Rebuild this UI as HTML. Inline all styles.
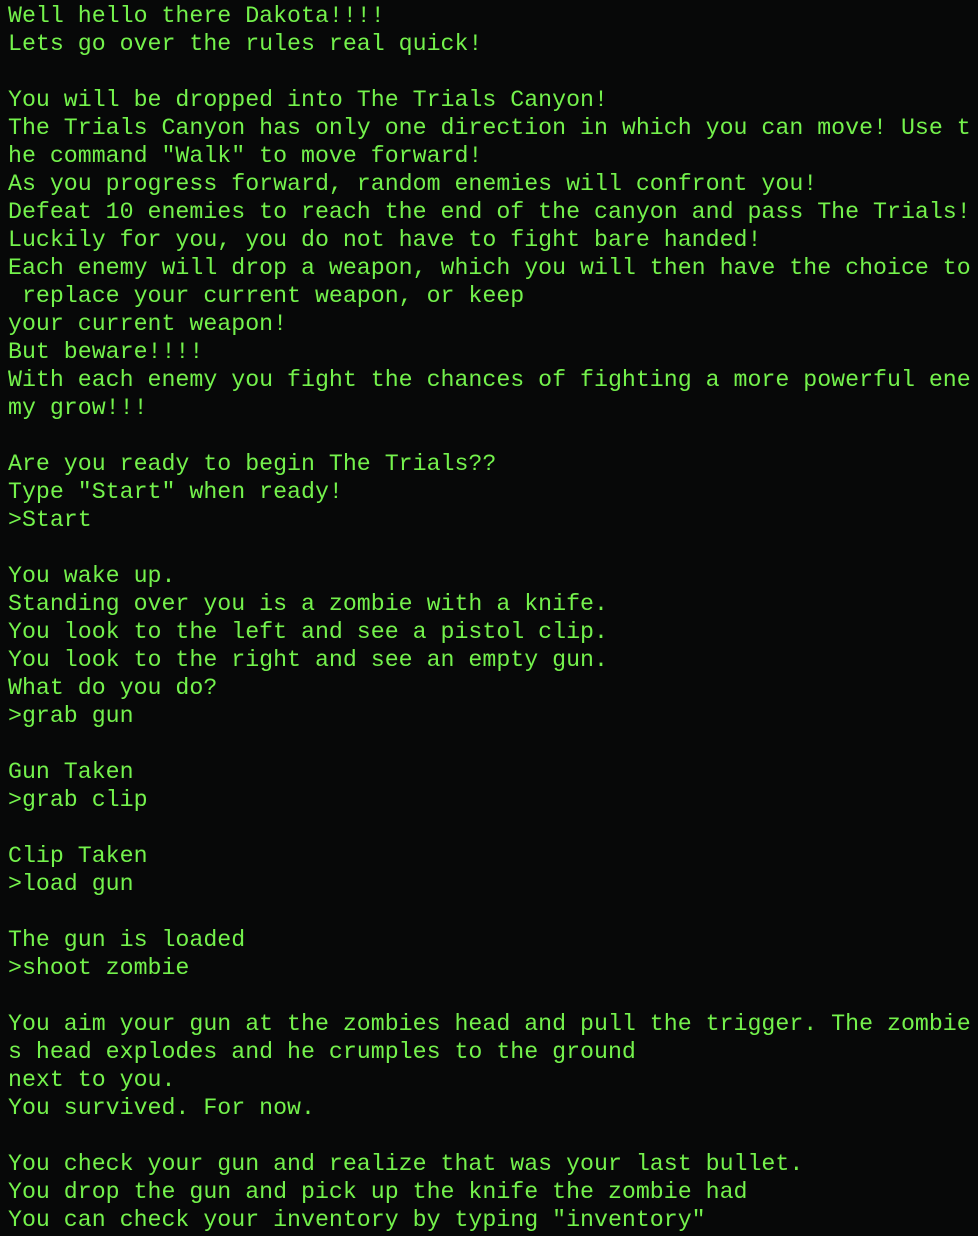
<!DOCTYPE html>
<html><head><meta charset="utf-8"><style>
html,body{margin:0;padding:0;background:#070808;width:978px;height:1236px;overflow:hidden}
pre{margin:0;position:absolute;left:8px;top:2px;font-family:"Liberation Mono",monospace;font-size:23.25px;line-height:28px;color:#74f24c;white-space:pre}
</style></head><body><pre>Well hello there Dakota!!!!
Lets go over the rules real quick!

You will be dropped into The Trials Canyon!
The Trials Canyon has only one direction in which you can move! Use t
he command "Walk" to move forward!
As you progress forward, random enemies will confront you!
Defeat 10 enemies to reach the end of the canyon and pass The Trials!
Luckily for you, you do not have to fight bare handed!
Each enemy will drop a weapon, which you will then have the choice to
 replace your current weapon, or keep
your current weapon!
But beware!!!!
With each enemy you fight the chances of fighting a more powerful ene
my grow!!!

Are you ready to begin The Trials??
Type "Start" when ready!
&gt;Start

You wake up.
Standing over you is a zombie with a knife.
You look to the left and see a pistol clip.
You look to the right and see an empty gun.
What do you do?
&gt;grab gun

Gun Taken
&gt;grab clip

Clip Taken
&gt;load gun

The gun is loaded
&gt;shoot zombie

You aim your gun at the zombies head and pull the trigger. The zombie
s head explodes and he crumples to the ground
next to you.
You survived. For now.

You check your gun and realize that was your last bullet.
You drop the gun and pick up the knife the zombie had
You can check your inventory by typing "inventory"</pre></body></html>
